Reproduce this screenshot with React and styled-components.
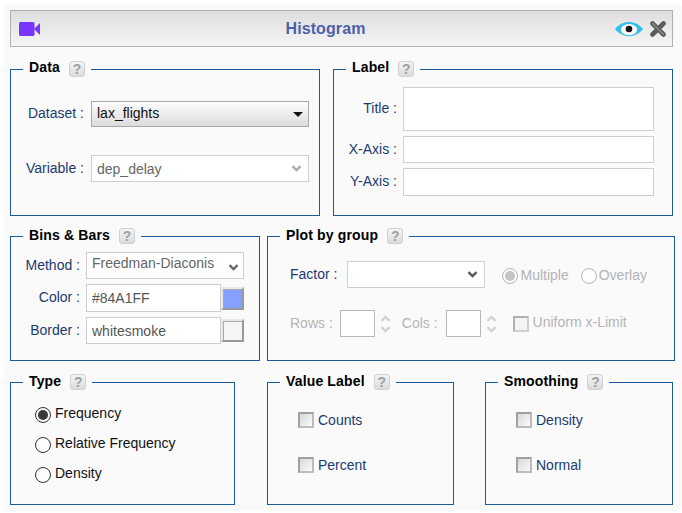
import React from 'react';
import styled, {createGlobalStyle} from 'styled-components';

const GlobalStyle = createGlobalStyle`
  html, body { margin: 0; background: #fff; }
  body { font-family: "Liberation Sans", Arial, sans-serif; font-size: 14px; }
  * { box-sizing: border-box; }
`;

const NAVY = '#1c3a70';
const MUTED = '#b4b4b4';

// Icons
const CameraIcon = () => (
  <svg width="21" height="14" viewBox="0 0 21 14">
    <rect x="0" y="0" width="15.5" height="14" rx="1.5" fill="#7a35fb" />
    <path d="M15 7 L21 1 V13 Z" fill="#7a35fb" />
  </svg>
);

const EyeIcon = () => (
  <svg width="28" height="16" viewBox="0 0 28 16">
    <path d="M0 8 C7 -1.5 21 -1.5 28 8 C21 17.5 7 17.5 0 8 Z" fill="#35bdec" />
    <ellipse cx="14" cy="8.6" rx="8.2" ry="5.6" fill="#fff" />
    <circle cx="14" cy="8" r="3.3" fill="#151515" />
  </svg>
);

const CloseIcon = () => (
  <svg width="16" height="16" viewBox="0 0 16 16">
    <path d="M2.5 2.5 L13.5 13.5 M13.5 2.5 L2.5 13.5" stroke="#5c5c5c" strokeWidth="4.6" strokeLinecap="round" />
    <path d="M2.5 2.5 L13.5 13.5" stroke="#8a8a8a" strokeWidth="1.6" strokeLinecap="round" />
  </svg>
);

const Chevron = ({color = '#666'}) => (
  <svg width="11" height="7" viewBox="0 0 11 7">
    <path d="M1.5 1.2 L5.5 5 L9.5 1.2" fill="none" stroke={color} strokeWidth="2.4" />
  </svg>
);

const ChevronUp = () => (
  <svg width="11" height="7" viewBox="0 0 11 7">
    <path d="M1.5 5.8 L5.5 2 L9.5 5.8" fill="none" stroke="#d2d2d2" strokeWidth="2.4" />
  </svg>
);

const Section = ({title, lineHeight = 14, children, ...rest}) => (
  <Box {...rest}>
    <Legend $lh={lineHeight}>{title}<HelpBtn>?</HelpBtn></Legend>
    {children}
  </Box>
);

export default function App() {
  return (
    <>
      <GlobalStyle />
      <Panel>
        <Header>
          <CameraIcon />
          <Title>Histogram</Title>
          <HeaderIcons>
            <EyeIcon />
            <CloseIcon />
          </HeaderIcons>
        </Header>

        <Row $top={14}>
          <Section title="Data" lineHeight={12} $w={310} $h={155}>
            <DataGrid>
              <FieldLabel>Dataset :</FieldLabel>
              <ButtonSelect>lax_flights<Caret /></ButtonSelect>
              <FieldLabel>Variable :</FieldLabel>
              <SelectBox $h={27}>dep_delay<Chevron color="#aaa" /></SelectBox>
            </DataGrid>
          </Section>
          <Section title="Label" lineHeight={12} $w={340} $h={155} $ml={13}>
            <LabelGrid>
              <FieldLabel $alignTop>Title :</FieldLabel>
              <TextArea readOnly />
              <FieldLabel>X-Axis :</FieldLabel>
              <TextInput readOnly $h={27} />
              <FieldLabel>Y-Axis :</FieldLabel>
              <TextInput readOnly $h={28} />
            </LabelGrid>
          </Section>
        </Row>

        <Row $top={12}>
          <Section title="Bins &amp; Bars" $w={250} $h={133}>
            <BinsGrid>
              <FieldLabel>Method :</FieldLabel>
              <MethodSelect $h={27}>Freedman-Diaconis<Chevron /></MethodSelect>
              <FieldLabel>Color :</FieldLabel>
              <ColorRow>
                <TextInput readOnly value="#84A1FF" $h={28} $w={135} />
                <Swatch $color="#84a1ff" />
              </ColorRow>
              <FieldLabel>Border :</FieldLabel>
              <ColorRow>
                <TextInput readOnly value="whitesmoke" $h={27} $w={135} />
                <Swatch $color="whitesmoke" />
              </ColorRow>
            </BinsGrid>
          </Section>
          <Section title="Plot by group" $w={408} $h={133} $ml={7}>
            <GroupTop>
              <FieldLabel>Factor :</FieldLabel>
              <SelectBox $h={27} $w={138}><span /><Chevron color="#555" /></SelectBox>
              <DisabledOptions>
                <Option><Radio $checked $disabled />Multiple</Option>
                <Option><Radio $disabled />Overlay</Option>
              </DisabledOptions>
            </GroupTop>
            <GroupBottom>
              <MutedLabel>Rows :</MutedLabel>
              <NumberBox $ml={7} />
              <Spinner><ChevronUp /><Chevron color="#d2d2d2" /></Spinner>
              <MutedLabel $left={11}>Cols :</MutedLabel>
              <NumberBox $ml={8} />
              <Spinner><ChevronUp /><Chevron color="#d2d2d2" /></Spinner>
              <UniformOption><CheckBox $disabled />Uniform x-Limit</UniformOption>
            </GroupBottom>
          </Section>
        </Row>

        <Row $top={13}>
          <Section title="Type" $w={225} $h={131}>
            <RadioList>
              <RadioItem><Radio $checked />Frequency</RadioItem>
              <RadioItem><Radio />Relative Frequency</RadioItem>
              <RadioItem><Radio />Density</RadioItem>
            </RadioList>
          </Section>
          <Section title="Value Label" $w={187} $h={131} $ml={32}>
            <CheckList>
              <CheckItem><CheckBox />Counts</CheckItem>
              <CheckItem><CheckBox />Percent</CheckItem>
            </CheckList>
          </Section>
          <Section title="Smoothing" $w={188} $h={131} $ml={31}>
            <CheckList>
              <CheckItem><CheckBox />Density</CheckItem>
              <CheckItem><CheckBox />Normal</CheckItem>
            </CheckList>
          </Section>
        </Row>
      </Panel>
    </>
  );
}

// Style
const Panel = styled.div`
  width: 678px;
  height: 507px;
  margin: 4px 0 0 4px;
  padding: 6px;
  background: #fafafa;
  border-radius: 3px;
`;

const Header = styled.div`
  display: flex;
  align-items: center;
  width: 663px;
  height: 37px;
  padding: 0 6px 0 8px;
  background: linear-gradient(#dedede, #f5f5f5);
  border: 1px solid #b0b0b0;
`;

const Title = styled.div`
  flex: 1;
  text-align: center;
  font-size: 16px;
  font-weight: bold;
  letter-spacing: 0.1px;
  color: #4f5fa9;
  padding-right: 4px;
`;

const HeaderIcons = styled.div`
  display: flex;
  align-items: center;
  gap: 7px;
`;

const Row = styled.div`
  display: flex;
  margin-top: ${p => p.$top}px;
`;

const Box = styled.fieldset`
  width: ${p => p.$w}px;
  height: ${p => p.$h}px;
  margin: 0 0 0 ${p => p.$ml || 0}px;
  padding: 0;
  min-width: 0;
  flex: none;
  border: 1px solid #1c5aa0;
`;

const Legend = styled.legend`
  display: flex;
  align-items: flex-start;
  height: 16px;
  line-height: ${p => p.$lh}px;
  margin-left: 12px;
  padding: 0 6px;
  font-size: 14px;
  font-weight: bold;
  letter-spacing: 0.15px;
  color: #000;
`;

const HelpBtn = styled.span`
  display: inline-flex;
  align-items: center;
  justify-content: center;
  width: 16px;
  height: 16px;
  margin-left: 9px;
  font-size: 14px;
  font-weight: bold;
  letter-spacing: 0;
  color: #a0a0a0;
  background: linear-gradient(#f4f4f4, #dcdcdc);
  border: 1px solid #d0d0d0;
  border-radius: 3px;
`;

const FieldLabel = styled.label`
  color: ${NAVY};
  text-align: right;
  white-space: nowrap;
  align-self: ${p => (p.$alignTop ? 'start' : 'center')};
  margin-top: ${p => (p.$alignTop ? '13px' : '-2px')};
`;

const MutedLabel = styled.span`
  color: ${MUTED};
  white-space: nowrap;
  margin-left: ${p => p.$left || 0}px;
  margin-bottom: 2px;
`;

const DataGrid = styled.div`
  display: grid;
  grid-template-columns: 72px 218px;
  column-gap: 7px;
  row-gap: 28px;
  padding: 24px 0 0 1px;
`;

const ButtonSelect = styled.div`
  display: flex;
  align-items: center;
  justify-content: space-between;
  height: 26px;
  padding: 0 5px 2px;
  color: #111;
  background: linear-gradient(#fdfdfd, #dcdcdc);
  border: 1px solid #a8a8a8;
`;

const Caret = styled.span`
  width: 0;
  height: 0;
  margin-top: 2px;
  border-left: 5px solid transparent;
  border-right: 5px solid transparent;
  border-top: 5px solid #111;
`;

const SelectBox = styled.div`
  display: flex;
  align-items: center;
  justify-content: space-between;
  width: ${p => (p.$w ? `${p.$w}px` : 'auto')};
  height: ${p => p.$h}px;
  padding: 0 6px 0 5px;
  color: #666;
  background: #fff;
  border: 1px solid #cfcfcf;
`;

const MethodSelect = styled(SelectBox)`
  padding: 0 4px 5px 5px;
  white-space: nowrap;
  overflow: hidden;
  & > svg { flex: none; margin: 8px 0 0 2px; }
`;

const TextInput = styled.input`
  display: block;
  width: ${p => (p.$w ? `${p.$w}px` : '100%')};
  height: ${p => p.$h}px;
  padding: 0 5px;
  font: 14px "Liberation Sans", Arial, sans-serif;
  color: #555;
  background: #fff;
  border: 1px solid #cfcfcf;
  border-radius: 0;
  outline: none;
`;

const TextArea = styled.textarea`
  display: block;
  width: 100%;
  height: 44px;
  padding: 0;
  background: #fff;
  border: 1px solid #cfcfcf;
  border-radius: 0;
  resize: none;
  outline: none;
`;

const LabelGrid = styled.div`
  display: grid;
  grid-template-columns: 62px 251px;
  column-gap: 6px;
  row-gap: 5px;
  padding: 10px 0 0 1px;
`;

const BinsGrid = styled.div`
  display: grid;
  grid-template-columns: 68px 158px;
  column-gap: 6px;
  row-gap: 5px;
  padding: 8px 0 0 1px;
`;

const ColorRow = styled.div`
  display: flex;
  align-items: center;
`;

const Swatch = styled.div`
  width: 23px;
  height: 23px;
  background: ${p => p.$color};
  border: 2px solid;
  border-color: #e8e8e8 #999 #999 #e8e8e8;
  box-shadow: inset 1px 1px 0 #aaa;
`;

const GroupTop = styled.div`
  display: flex;
  align-items: center;
  padding: 17px 0 0 22px;
  & > label { margin-right: 10px; }
`;

const DisabledOptions = styled.div`
  display: flex;
  gap: 12px;
  margin-left: 17px;
`;

const Option = styled.span`
  display: flex;
  align-items: center;
  gap: 2px;
  color: ${MUTED};
`;

const GroupBottom = styled.div`
  display: flex;
  align-items: center;
  padding: 22px 0 0 22px;
`;

const NumberBox = styled.div`
  width: 35px;
  height: 27px;
  margin-left: ${p => p.$ml}px;
  background: #fff;
  border: 1px solid #b8b8b8;
`;

const Spinner = styled.div`
  display: flex;
  flex-direction: column;
  gap: 4px;
  margin-left: 5px;
`;

const UniformOption = styled(Option)`
  gap: 4px;
  margin: 0 0 3px 16px;
  & > span { margin-top: 3px; }
`;

const Radio = styled.span`
  flex: none;
  width: 16px;
  height: 16px;
  border-radius: 50%;
  margin-top: 3px;
  background: ${p => (p.$checked ? (p.$disabled ? '#c4c4c4' : '#3a3a3a') : '#fff')};
  background-clip: content-box;
  padding: 2px;
  border: 1px solid ${p => (p.$disabled ? '#b8b8b8' : '#333')};
`;

const RadioList = styled.div`
  display: flex;
  flex-direction: column;
  gap: 14px;
  padding: 15px 0 0 24px;
`;

const RadioItem = styled.div`
  display: flex;
  align-items: center;
  gap: 4px;
  height: 16px;
  color: #111;
`;

const CheckBox = styled.span`
  flex: none;
  width: 16px;
  height: 16px;
  background: ${p => (p.$disabled ? '#f4f4f4' : 'linear-gradient(135deg, #d8d8d8, #fafafa)')};
  border: 2px solid;
  border-color: ${p => (p.$disabled ? '#b0b0b0 #d0d0d0 #d0d0d0 #b0b0b0' : '#a0a0a0 #bcbcbc #bcbcbc #a0a0a0')};
`;

const CheckList = styled.div`
  display: flex;
  flex-direction: column;
  gap: 29px;
  padding: 22px 0 0 30px;
`;

const CheckItem = styled.div`
  display: flex;
  align-items: center;
  gap: 4px;
  height: 16px;
  color: ${NAVY};
`;
